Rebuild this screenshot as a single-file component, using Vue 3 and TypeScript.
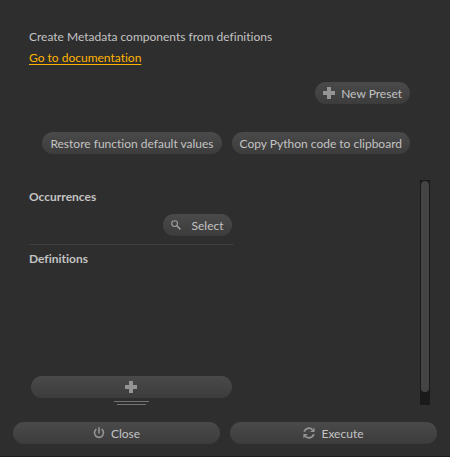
<script setup lang="ts">
import { ref } from 'vue'

const title = ref('Create Metadata components from definitions')
const visiblePercent = ref(94.5)
</script>

<template>
  <main class="panel">
    <header class="intro">
      <p class="title">{{ title }}</p>
      <a class="doc-link" href="#documentation">Go to documentation</a>
    </header>

    <div class="toolbar">
      <button type="button" class="btn">
        <svg class="icon" width="12" height="12" viewBox="0 0 12 12" aria-hidden="true">
          <path d="M4 0h4v4h4v4H8v4H4V8H0V4h4z" fill="#949494" />
        </svg>
        <span>New Preset</span>
      </button>
    </div>

    <div class="toolbar actions">
      <button type="button" class="btn"><span>Restore function default values</span></button>
      <button type="button" class="btn"><span>Copy Python code to clipboard</span></button>
    </div>

    <div class="scroll-area">
      <div class="fields">
        <section class="occurrences">
          <h2 class="label">Occurrences</h2>
          <button type="button" class="btn select">
            <svg class="icon" width="10" height="10" viewBox="0 0 10 10" aria-hidden="true">
              <circle cx="3.6" cy="3.6" r="2.9" fill="none" stroke="#a0a0a0" stroke-width="1.1" />
              <path d="M5.8 5.8L9.4 9.4" fill="none" stroke="#a0a0a0" stroke-width="1.5" />
            </svg>
            <span>Select</span>
          </button>
        </section>
        <section class="definitions">
          <h2 class="label">Definitions</h2>
          <button type="button" class="btn add" aria-label="Add definition">
            <svg class="icon" width="12" height="12" viewBox="0 0 12 12" aria-hidden="true">
              <path d="M4 0h4v4h4v4H8v4H4V8H0V4h4z" fill="#949494" />
            </svg>
          </button>
          <div class="grip"><i class="grip-line"></i><i class="grip-line short"></i></div>
        </section>
      </div>
      <div class="scrollbar">
        <div class="thumb" :style="{ height: visiblePercent + '%' }"></div>
      </div>
    </div>

    <footer class="footer">
      <button type="button" class="btn">
        <svg class="icon" width="12" height="12" viewBox="0 0 12 12" aria-hidden="true">
          <path d="M3.4 2.2A4.5 4.5 0 1 0 8.6 2.2" fill="none" stroke="#949494" stroke-width="1.6" />
          <path d="M6 0.2V6.4" fill="none" stroke="#949494" stroke-width="1.6" />
        </svg>
        <span>Close</span>
      </button>
      <button type="button" class="btn">
        <svg class="icon" width="12" height="12" viewBox="0 0 12 12" aria-hidden="true">
          <path d="M1.2 4.8A4.9 4.9 0 0 1 9.4 2.6M10.8 7.2A4.9 4.9 0 0 1 2.6 9.4" fill="none" stroke="#949494" stroke-width="1.9" />
          <path d="M11.6 0.4V4.9H7.2zM0.4 11.6V7.1H4.8z" fill="#949494" />
        </svg>
        <span>Execute</span>
      </button>
    </footer>
  </main>
</template>

<style>
body {
  margin: 0;
  background: #2e2e2e;
}
</style>

<style scoped>
.panel {
  box-sizing: border-box;
  display: flex;
  flex-direction: column;
  min-height: 100vh;
  padding: 28px 13px 12px;
  border-bottom: 1px solid #1c1c1c;
  background: #2e2e2e;
  color: #c3c3c3;
  font: 12px/18px Lato, "Noto Sans", sans-serif;
  font-variant-ligatures: none;
}
.intro {
  display: flex;
  flex-direction: column;
  align-items: flex-start;
  gap: 3px;
  padding: 0 16px;
}
.title,
.label {
  margin: 0;
}
.doc-link {
  color: #ffb400;
  text-underline-offset: 2px;
}
.toolbar {
  display: flex;
  justify-content: flex-end;
  gap: 10px;
  padding: 15px 27px 0;
}
.actions {
  padding-top: 28px;
}
.btn {
  display: inline-flex;
  align-items: center;
  justify-content: center;
  gap: 6px;
  height: 22px;
  margin: 0;
  padding: 0 8px;
  border: 0;
  border-radius: 11px;
  background: linear-gradient(#4a4a4a, #3c3c3c);
  color: #c3c3c3;
  font: inherit;
  font-variant-ligatures: none;
  white-space: nowrap;
}
.btn span {
  padding-top: 1px;
}
.icon {
  flex: none;
}
.scroll-area {
  display: flex;
  flex: 1;
  justify-content: space-between;
  margin: 26px 7px 17px 16px;
}
.fields {
  display: flex;
  flex-direction: column;
  width: 51%;
}
.label {
  font-size: 12px;
  font-weight: 700;
}
.occurrences {
  display: flex;
  flex-direction: column;
  gap: 8px;
  padding: 8px 0;
  border-bottom: 1px solid #3e3e3e;
}
.select {
  align-self: flex-end;
  gap: 10px;
  margin-right: 2px;
}
.definitions {
  display: flex;
  flex: 1;
  flex-direction: column;
  padding-top: 5px;
}
.add {
  margin: auto 2px 0;
}
.grip {
  display: flex;
  flex-direction: column;
  align-items: center;
  gap: 2px;
  padding-top: 3px;
}
.grip-line {
  width: 35px;
  height: 1px;
  background: #747474;
}
.short {
  width: 29px;
}
.scrollbar {
  box-sizing: border-box;
  width: 10px;
  padding: 1px;
  background: #1a1a1a;
}
.thumb {
  border-radius: 4px;
  background: #444444;
}
.footer {
  display: grid;
  grid-template-columns: 1fr 1fr;
  gap: 10px;
}
</style>
